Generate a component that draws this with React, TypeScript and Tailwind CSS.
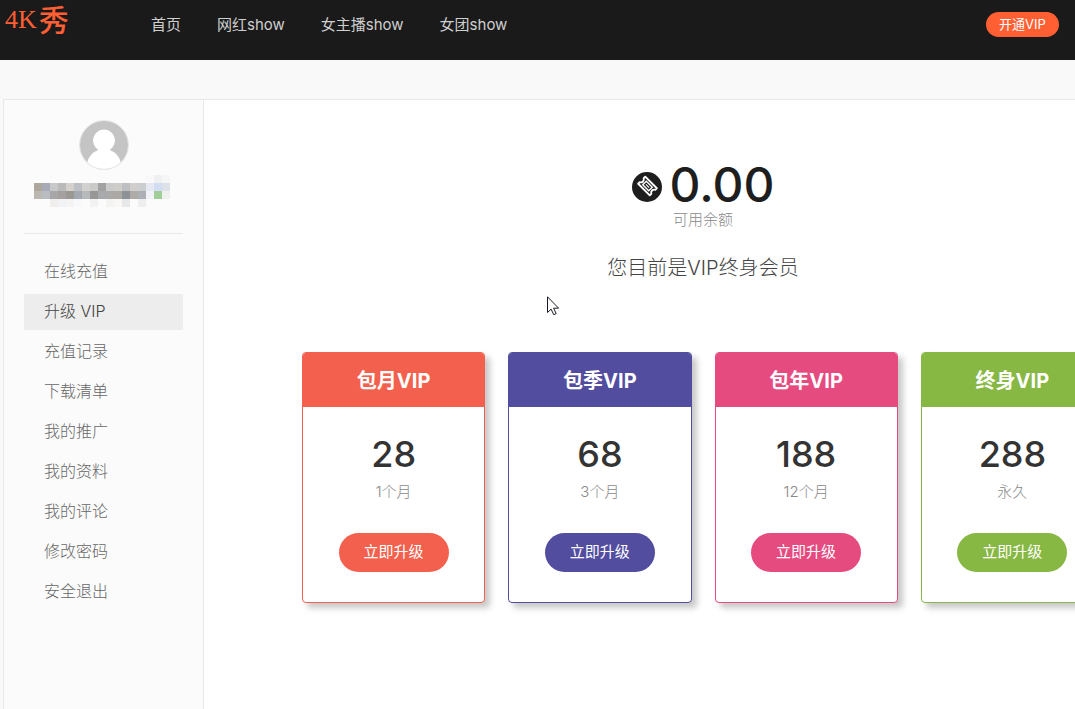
import { clsx } from "clsx";

interface Plan {
  title: string;
  price: number;
  period: string;
  border: string;
  fill: string;
}

const navLinks = ["首页", "网红show", "女主播show", "女团show"];

const menuItems = [
  "在线充值",
  "升级 VIP",
  "充值记录",
  "下载清单",
  "我的推广",
  "我的资料",
  "我的评论",
  "修改密码",
  "安全退出",
];

const plans: Plan[] = [
  { title: "包月VIP", price: 28, period: "1个月", border: "border-[#f3614e]", fill: "bg-[#f3614e]" },
  { title: "包季VIP", price: 68, period: "3个月", border: "border-[#524d9f]", fill: "bg-[#524d9f]" },
  { title: "包年VIP", price: 188, period: "12个月", border: "border-[#e64b80]", fill: "bg-[#e64b80]" },
  { title: "终身VIP", price: 288, period: "永久", border: "border-[#88b844]", fill: "bg-[#88b844]" },
];

// Masked account name, one string per 8px cell ("" is left empty)
const maskRows = [
  ["", "", "", "", "", "", "", "", "", "", "", "", "", "", "#f9f9fc", "#eef1f0", "#f6f6f6"],
  ["#aea79b", "#a6abb5", "#c6c8ca", "#bababa", "#d3d0ce", "#bcc0c4", "#d2d1d0", "#cacac9", "#a2a2a2", "#cacaca", "#cfcdca", "#bebfc0", "#d0cfce", "#cccdcf", "#e6e9f2", "#d1ddf2", "#dde1e9"],
  ["#bdb7b1", "#b9bdc2", "#a7a7a8", "#a69f9f", "#9b9893", "#a4a8b0", "#b6babc", "#979797", "#a8a9ad", "#abaaa9", "#aba8a5", "#8d9198", "#afaba6", "#adb0b6", "#f1f3f9", "#a1cd98", "#eff1ef"],
  ["", "", "#f0eded", "#f1f2f6", "#f5f3f3", "#f9f9fc", "", "#f2f2f2", "", "#f3f3f1", "#f9f7f6", "#e7e8ea", "", "#eeeeee", "", "", ""],
];

const Avatar = () => (
  <svg viewBox="0 0 50 50" className="size-[50px]" aria-hidden="true">
    <defs>
      <clipPath id="avatar-clip">
        <circle cx="25" cy="25" r="24" />
      </clipPath>
    </defs>
    <circle cx="25" cy="25" r="24.5" fill="#fff" stroke="#e4e4e4" />
    <g clipPath="url(#avatar-clip)">
      <rect width="50" height="50" fill="#c4c4c4" />
      <path
        d="M25 9.500a11 11 0 0 1 5.600 20.400C36.500 32 40.500 36.500 42 43v7H8v-7c1.500-6.500 5.500-11 11.400-13.100A11 11 0 0 1 25 9.500Z"
        fill="#fff"
      />
    </g>
  </svg>
);

const MaskedName = () => (
  <svg viewBox="0 0 140 32" className="h-8 w-[140px]" shapeRendering="crispEdges" aria-hidden="true">
    {maskRows.map((row, y) =>
      row.map((color, x) =>
        color ? (
          <rect key={`${x}-${y}`} x={x * 8} y={y * 8} width="8" height="8" fill={color} />
        ) : null,
      ),
    )}
  </svg>
);

const TicketIcon = () => (
  <svg viewBox="0 0 30 30" className="mt-1 size-[30px]" aria-hidden="true">
    <circle cx="15" cy="15" r="15" fill="#1e1e1e" />
    <g transform="rotate(45 15.500 14)" fill="none" stroke="#fff">
      <path
        d="M7.300 9h16.400v2.200c-2.400 1.200-2.400 4.400 0 5.600V19H7.300v-2.200c2.400-1.200 2.400-4.400 0-5.600Z"
        strokeWidth="1.900"
        strokeLinejoin="round"
      />
      <rect x="11.300" y="11.500" width="8.400" height="5" strokeWidth="1.400" />
      <path d="M13.300 14h4.400" strokeWidth="1.200" />
    </g>
  </svg>
);

const Pointer = () => (
  <svg
    viewBox="0 0 13 20"
    className="pointer-events-none absolute top-[196px] left-[343px] h-5 w-[13px]"
    aria-hidden="true"
  >
    <path
      d="M.5 .8v15.700l3.600-3.400 2.600 5.600 2.500-1.100-2.600-5.400h5Z"
      fill="#fff"
      stroke="#1a1a24"
      strokeLinejoin="round"
    />
  </svg>
);

const Header = () => (
  <header className="flex h-[60px] items-start bg-[#1a1a1a] pr-4 pl-[5px]">
    <a href="#" className="flex h-10 w-32 items-center gap-0.5 leading-none text-[#ff5f33]">
      <span className="font-['Liberation_Serif','Noto_Sans_CJK_SC',serif] text-[26px]">4K</span>
      <span className="text-3xl font-medium">秀</span>
    </a>
    <nav className="flex h-[50px] items-center">
      {navLinks.map((label) => (
        <a key={label} href="#" className="px-[18px] text-[15px] text-[#cfcfcf] hover:text-white">
          {label}
        </a>
      ))}
    </nav>
    <button
      type="button"
      className="mt-3 ml-auto h-[25px] w-[73px] rounded-full bg-[#ff5f33] text-[13px] text-white"
    >
      开通VIP
    </button>
  </header>
);

const Sidebar = () => (
  <aside className="w-[201px] shrink-0 border-x border-[#e8e8e8] bg-[#fbfbfb] px-5 pt-5">
    <div className="flex flex-col items-center border-b border-[#e8e8e8] pb-[26px]">
      <Avatar />
      <div className="mt-[5px] flex justify-center">
        <MaskedName />
      </div>
    </div>
    <ul className="mt-5 flex flex-col gap-1">
      {menuItems.map((item) => (
        <li key={item}>
          <a
            href="#"
            className={clsx(
              "block rounded-xs px-5 pb-0.5 text-base leading-[34px] font-light",
              item === "升级 VIP" ? "bg-[#ededed] text-[#444]" : "text-[#666] hover:bg-[#ededed]",
            )}
          >
            {item}
          </a>
        </li>
      ))}
    </ul>
  </aside>
);

const PlanCard = ({ title, price, period, border, fill }: Plan) => (
  <article
    className={clsx(
      "overflow-hidden rounded-sm border bg-white pb-[30px] text-center shadow-[5px_5px_6px_rgba(0,0,0,0.22)]",
      border,
    )}
  >
    <h3 className={clsx("pt-0.5 text-xl leading-[52px] font-bold text-white", fill)}>{title}</h3>
    <p className="mt-[23px] text-4xl leading-12 font-medium text-[#333]">{price}</p>
    <p className="mt-1 text-[15px] leading-5 font-light text-[#888]">{period}</p>
    <button
      type="button"
      className={clsx("mt-[31px] h-[39px] w-[110px] rounded-full text-[15px] text-white", fill)}
    >
      立即升级
    </button>
  </article>
);

export default function App() {
  return (
    <div className="flex min-h-screen flex-col overflow-hidden bg-[#f9f9f9] font-['Inter','Noto_Sans_CJK_SC',sans-serif]">
      <Header />
      <div className="mt-[39px] ml-[3px] flex min-w-[1199px] flex-1 border-t border-[#e8e8e8]">
        <Sidebar />
        <main className="relative flex-1 bg-white px-[98px] pt-[61px]">
          <section className="text-center">
            <div className="flex items-center justify-center gap-2 text-5xl leading-12 font-medium text-[#1e1e1e]">
              <TicketIcon />
              <span>0.00</span>
            </div>
            <p className="text-[15px] leading-[22px] font-light text-[#888]">可用余额</p>
            <h2 className="mt-6 text-xl leading-[26px] font-light text-[#444]">您目前是VIP终身会员</h2>
          </section>
          <section className="mt-[71px] grid grid-cols-4 gap-[23px]">
            {plans.map((plan) => (
              <PlanCard key={plan.title} {...plan} />
            ))}
          </section>
          <Pointer />
        </main>
      </div>
    </div>
  );
}
